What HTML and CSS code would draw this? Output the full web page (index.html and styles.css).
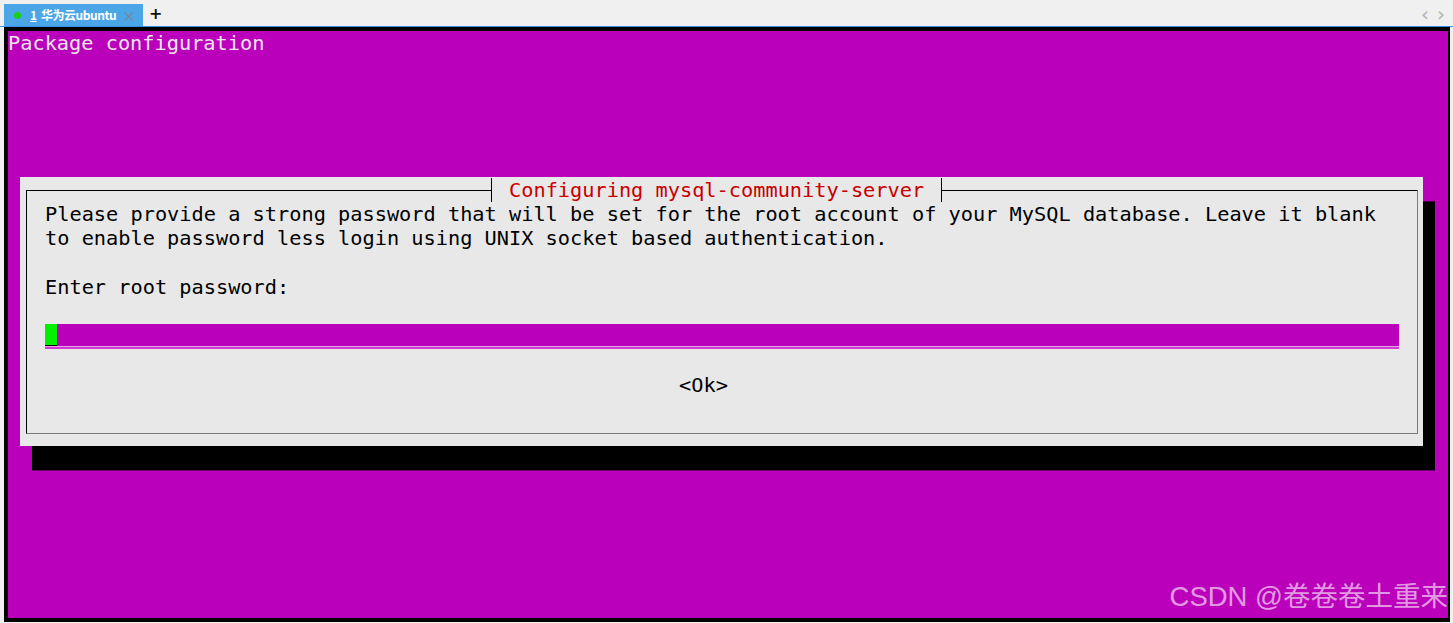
FILE: index.html
```html
<!DOCTYPE html>
<html lang="zh-CN">
<head>
<meta charset="utf-8">
<title>华为云ubuntu</title>
<link rel="stylesheet" href="styles.css">
</head>
<body>
<div class="tabbar">
  <div class="tab">
    <span class="dot"></span>
    <span class="tab-label"><span class="tab-num">1</span> 华为云ubuntu</span>
    <span class="tab-close">×</span>
  </div>
  <span class="tab-add">+</span>
  <span class="tab-nav"><span>‹</span><span>›</span></span>
</div>
<div class="term">
  <div class="row header-line">Package configuration</div>
  <div class="dialog">
    <div class="box">
      <div class="box-title"><span class="tick"></span><span class="title-text">Configuring mysql-community-server</span><span class="tick"></span></div>
      <div class="row">Please provide a strong password that will be set for the root account of your MySQL database. Leave it blank</div>
      <div class="row">to enable password less login using UNIX socket based authentication.</div>
      <div class="row"></div>
      <div class="row">Enter root password:</div>
      <div class="row"></div>
      <div class="row input-row"><div class="input"><span class="cursor"></span></div></div>
      <div class="row"></div>
      <div class="row ok-row"><span class="ok">&lt;Ok&gt;</span></div>
      <div class="row"></div>
    </div>
  </div>
  <div class="watermark">CSDN @卷卷卷土重来</div>
</div>
</body>
</html>
```
FILE: styles.css
```css
:root {
  --lh: 24.4px;
  --magenta: #ba00ba;
  --dlg: #e8e8e8;
}
* { box-sizing: border-box; }
html, body {
  margin: 0;
  padding: 0;
  background: #f0f0f0;
  overflow: hidden;
}
body {
  width: 1453px;
  height: 623px;
}
.tabbar {
  height: 27px;
  padding: 4px 0 0 4px;
  display: flex;
  align-items: flex-end;
  border-bottom: 1px solid #3a8ee6;
  font-family: "Noto Sans CJK SC", "Noto Sans", sans-serif;
}
.tab {
  width: 139px;
  height: 22px;
  background: #4aa6e6;
  display: flex;
  align-items: center;
  padding-left: 10px;
  color: #fff;
}
.dot {
  width: 7px;
  height: 7px;
  border-radius: 50%;
  background: #16d01a;
  margin-right: 9px;
}
.tab-label {
  font-size: 12px;
  font-weight: 700;
  line-height: 1;
  white-space: nowrap;
  letter-spacing: -0.45px;
}
.tab-num { text-decoration: underline; margin-right: 2px; }
.tab-close {
  margin-left: auto;
  margin-right: 7px;
  color: #7a8590;
  font-size: 14px;
  line-height: 1;
}
.tab-add {
  align-self: center;
  margin-left: 6px;
  margin-top: -2px;
  font-size: 16px;
  line-height: 1;
  font-weight: 700;
  color: #111;
  font-family: "DejaVu Sans", sans-serif;
}
.tab-nav {
  margin-left: auto;
  align-self: center;
  margin-top: -3px;
  margin-right: 8px;
  display: flex;
  gap: 8px;
  color: #b4b4b4;
  font-size: 20px;
  line-height: 1;
  font-family: "DejaVu Sans", sans-serif;
}
.term {
  position: relative;
  margin-left: 4px;
  width: 1446px;
  height: 595px;
  background: var(--magenta);
  border-style: solid;
  border-color: #000;
  border-width: 4px 2px 4px 4px;
  font-family: "DejaVu Sans Mono", monospace;
  font-size: 20.3px;
  line-height: var(--lh);
  color: #000;
}
.row {
  height: var(--lh);
  white-space: pre;
}
.header-line { color: #ece6ec; }
.dialog {
  margin: 122px 0 0 12px;
  width: 1403px;
  height: 268.4px;
  background: var(--dlg);
  box-shadow: 12px 24.4px 0 0 #000;
  padding: 12.2px 5px 0 6px;
}
.box {
  position: relative;
  border-style: solid;
  border-width: 1px;
  border-color: #000 #7a7a7a #7a7a7a #000;
  padding: 11.2px 0 12.2px 18px;
}
.box-title {
  position: absolute;
  top: -12.7px;
  left: 464px;
  height: var(--lh);
  display: flex;
  background: var(--dlg);
  color: #c80000;
}
.tick {
  width: 1px;
  height: var(--lh);
  background: #000;
}
.title-text {
  padding: 0 17px 0 17px;
  white-space: pre;
}
.input-row { display: flex; }
.input {
  width: 1354px;
  height: 23px;
  background: var(--magenta);
  border-bottom: 1px solid #e2a6e2;
  box-shadow: 0 2px 0 #d238d2;
  display: flex;
}
.cursor {
  width: 12px;
  height: 22px;
  background: #00f000;
  border-bottom: 1px solid #000;
}
.ok-row { padding-left: 634px; }
.watermark {
  position: absolute;
  right: 0;
  bottom: 5px;
  font-family: "Liberation Sans", "Noto Sans CJK SC", sans-serif;
  font-size: 27.5px;
  line-height: 32px;
  color: rgba(255, 255, 255, 0.62);
  white-space: nowrap;
}
```
